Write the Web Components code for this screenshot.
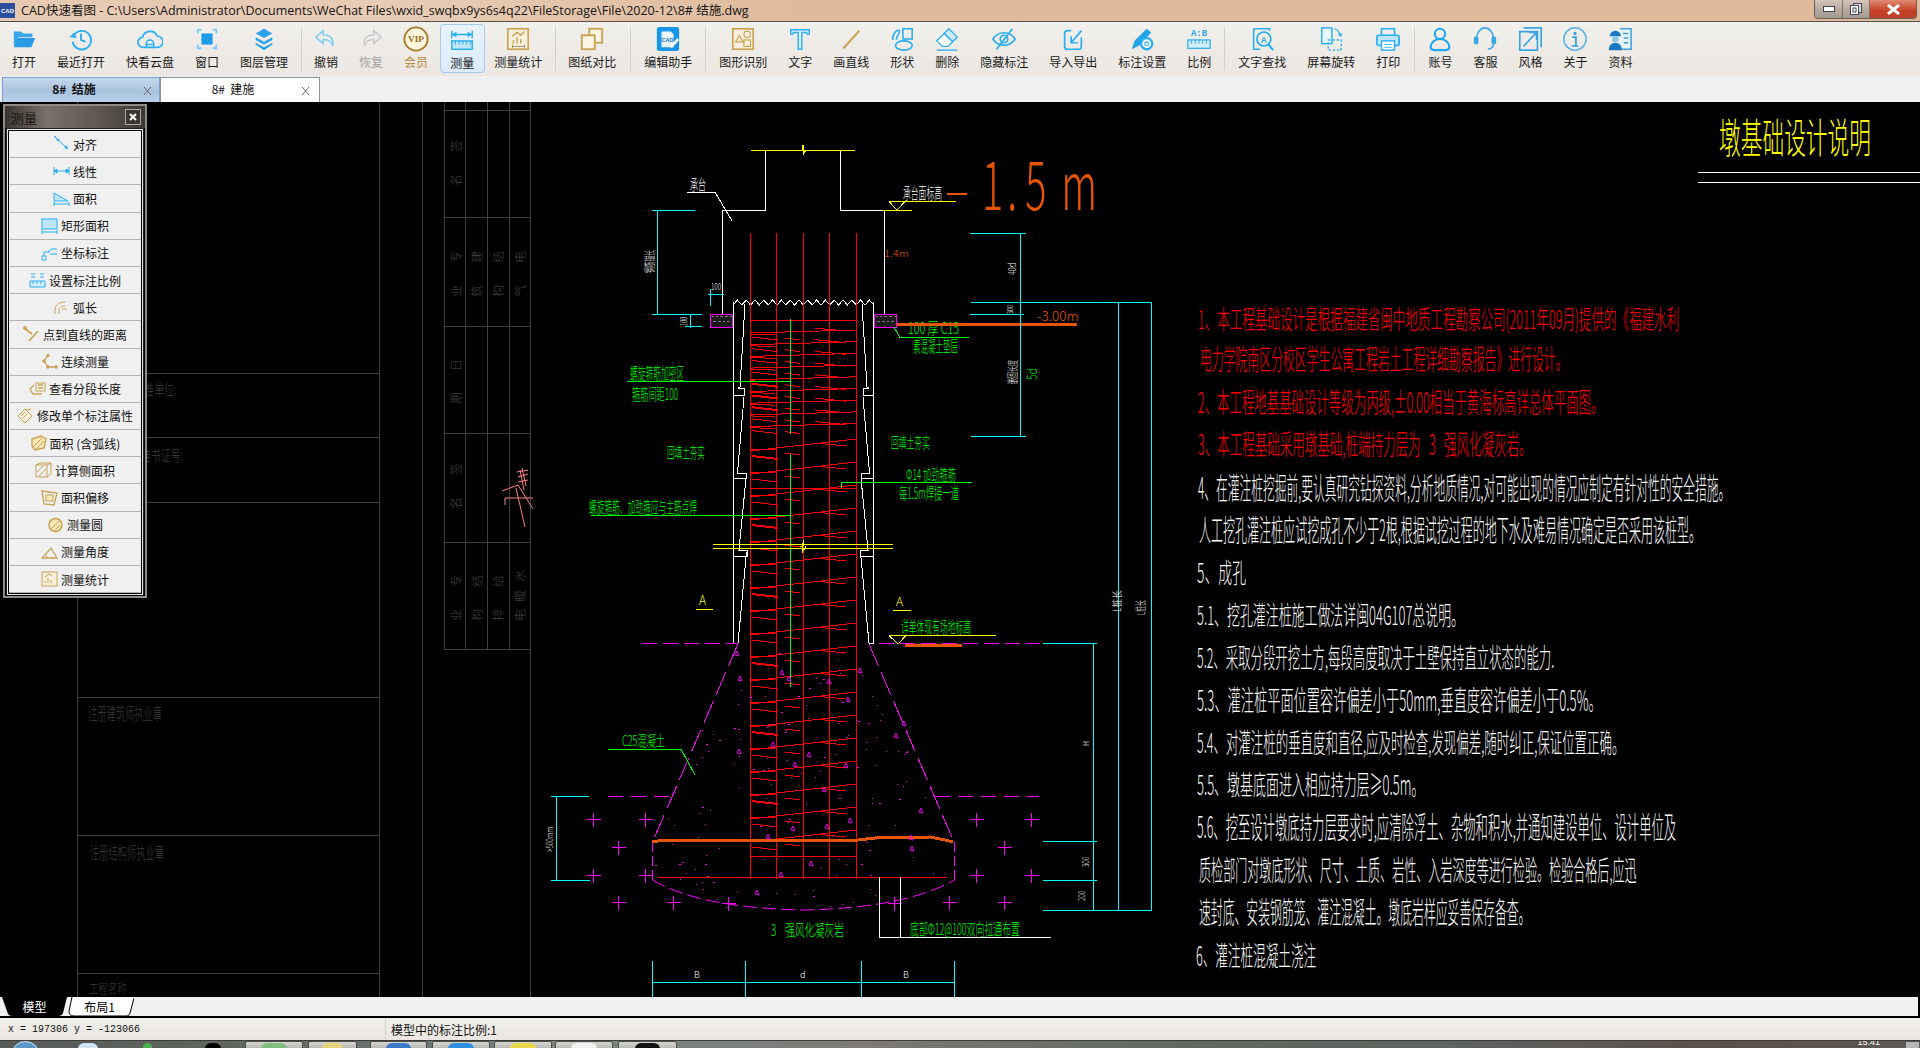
<!DOCTYPE html>
<html lang="zh"><head><meta charset="utf-8"><title>CAD快速看图</title>
<style>html,body{margin:0;padding:0;background:#000;overflow:hidden}
body{font-family:"Noto Sans CJK SC","Noto Sans",sans-serif;font-size:12px;width:1920px;height:1048px}</style></head>
<body><cad-app></cad-app>
<script>
const B='#29aef0',L='#7fcdf5',G='#c9a354';
const s=(c,w=1.8)=>`fill="none" stroke="${c}" stroke-width="${w}"`;
const ICON={
open:`<path d="M3 6h8l2 2h10v4H8l-5 10z" fill="#3aa6e8"/><path d="M7 13h19l-4 10H3z" fill="#2a9be6"/>`,
recent:`<path d="M7 9A10 10 0 1 1 5 17" ${s(B,2)}/><path d="M1.500 12l5-5 3 6z" fill="${B}"/><path d="M14 8v7l5 2" ${s(B,2)}/>`,
cloud:`<path d="M7 23a5.500 5.500 0 0 1-1-11 8.500 8.500 0 0 1 16-1 6 6 0 0 1 0 12z" ${s(B,1.8)}/><path d="M10 23v-4a4 4 0 0 1 8 0v4M10 20h8" ${s(B,1.6)}/>`,
win:`<path d="M4 8V4h4M20 4h4v4M24 20v4h-4M8 24H4v-4" ${s(L,2)}/><rect x="8" y="8" width="12" height="12" fill="#1c9be6"/>`,
layer:`<path d="M14 3l9 5-9 5-9-5z" fill="#2aa3ec"/><path d="M5 12l9 5 9-5v3l-9 5-9-5z" fill="#2aa3ec"/><path d="M5 18l9 5 9-5v2l-9 6-9-6z" fill="#2aa3ec"/>`,
undo:`<path d="M11 5L3 12l8 7v-4.500c6 0 9 2 10 7 2-7-2-12-10-12z" ${s(L,1.600)}/>`,
redo:`<path d="M17 5l8 7-8 7v-4.500c-6 0-9 2-10 7-2-7 2-12 10-12z" ${s('#c9c9c9',1.600)}/>`,
vip:`<circle cx="14" cy="14" r="12.500" fill="#fff6de" stroke="#a9782a" stroke-width="2"/><text x="14" y="17.500" font-family="Liberation Serif" font-weight="700" font-size="10" text-anchor="middle" fill="#a06a14">VIP</text>`,
meas:`<path d="M3 8h22M3 4v8M25 4v8" ${s(B,1.500)}/><path d="M3 8l5-3v6zM25 8l-5-3v6z" fill="${B}"/><rect x="3" y="15" width="22" height="9" fill="#bfe5fb" stroke="${B}" stroke-width="1.500"/><path d="M7 15v4M11 15v4M15 15v4M19 15v4M23 15v4" ${s(B,1)}/>`,
stat:`<rect x="3" y="3" width="22" height="22" fill="#f7f0dc" stroke="${G}" stroke-width="1.800"/><path d="M9 15v4M13 12v7M17 14v5M8 11l5-4 4 3 4-4" ${s(G,1.500)}/><path d="M8 22h13M8 20v4M21 20v4" ${s('#9a8a66',1)}/>`,
comp:`<rect x="11" y="3" width="14" height="15" fill="#fbf5e4" stroke="${G}" stroke-width="2"/><rect x="3" y="10" width="14" height="15" fill="#fbf5e4" stroke="${G}" stroke-width="2"/>`,
edit:`<rect x="2" y="1" width="24" height="26" rx="3" fill="#1796e8"/><path d="M7 6h10l3 3v14H7z" fill="#e9f6ff"/><text x="13.500" y="17" font-family="Liberation Sans" font-weight="700" font-size="6" text-anchor="middle" fill="#1577b8">CAD</text><path d="M16 22l8-9 2 2-8 9z" fill="#fff"/>`,
shape:`<rect x="3" y="3" width="22" height="22" fill="#f8f1de" stroke="${G}" stroke-width="1.800"/><path d="M6 17l4-7 4 7z" ${s(G,1.300)}/><circle cx="18.500" cy="9" r="3.500" ${s(G,1.300)}/><rect x="15" y="15" width="7" height="7" ${s(G,1.300)}/>`,
text:`<path d="M4 4h20v5h-2l-1-2h-5v18h-4V7H7L6 9H4z" fill="#d8f0fc" stroke="${B}" stroke-width="1.500"/>`,
line:`<path d="M6 24L23 5" ${s(G,2.300)}/>`,
form:`<rect x="15" y="3" width="10" height="11" ${s(B,1.700)}/><ellipse cx="16" cy="21" rx="9" ry="5" ${s(B,1.700)}/><path d="M4 15c-1-6 5-12 7-10s-4 7-3 10" ${s(B,1.700)}/>`,
erase:`<path d="M16 3l9 9-5 5-9-9z" fill="#cfeafa" stroke="${B}" stroke-width="1.400"/><path d="M11 8l9 9-5 5H9l-6-6z" fill="#fff" stroke="${B}" stroke-width="1.400"/><path d="M3 26h22" ${s(B,1.400)}/>`,
eye:`<path d="M2 14c6-9 18-9 24 0-6 9-18 9-24 0z" ${s(B,1.800)}/><circle cx="14" cy="14" r="4" ${s(B,1.800)}/><path d="M6 25L23 3" ${s(B,1.800)}/>`,
io:`<path d="M12 5H8a3 3 0 0 0-3 3v14a3 3 0 0 0 3 3h12a3 3 0 0 0 3-3V12" ${s(B,1.800)}/><path d="M12 18l11-13M12 11v7h7" ${s(B,1.800)}/>`,
dim:`<path d="M3 25l3-9L19 3l5 4L11 21z" fill="#22a3ea"/><circle cx="19" cy="19" r="6" fill="#fff" stroke="${B}" stroke-width="2.500"/><circle cx="19" cy="19" r="2" ${s(B,1.300)}/>`,
ratio:`<text x="14" y="11" font-family="Liberation Mono" font-weight="700" font-size="9.500" text-anchor="middle" fill="#1fa2ea">A:B</text><rect x="2" y="15" width="24" height="9" fill="#d4eefc" stroke="${B}" stroke-width="1.300"/><path d="M6 15v4M10 15v4M14 15v4M18 15v4M22 15v4" ${s(B,1)}/>`,
find:`<path d="M5 3h17v2M5 3v22h7" ${s(B,1.700)}/><circle cx="16" cy="14" r="7.500" ${s(B,1.800)}/><path d="M21 20l5 6" ${s(B,2.400)}/><text x="16" y="18" font-family="Liberation Sans" font-weight="700" font-size="9" text-anchor="middle" fill="${B}">A</text>`,
rot:`<rect x="4" y="2" width="11" height="17" fill="#e6f5fd" stroke="${B}" stroke-width="1.500"/><path d="M11 15h14v11H11z" fill="none" stroke="${B}" stroke-width="1.500" stroke-dasharray="2.500 2"/><path d="M18 3c3 1 5 3 6 7M22 8l2 3 2-3" ${s(B,1.300)}/>`,
print:`<path d="M7 10V3h14v7" ${s(B,1.800)}/><rect x="2" y="10" width="24" height="11" rx="2" fill="#bfe5fb" stroke="${B}" stroke-width="1.800"/><rect x="7" y="16" width="14" height="10" fill="#fff" stroke="${B}" stroke-width="1.500"/><path d="M10 20h8M10 23h8" ${s(B,1)}/>`,
user:`<circle cx="14" cy="8.500" r="5.500" ${s('#1ea7f2',2.300)}/><path d="M14 14c-6 0-10 4-10 9 0 2 2 3 4 3h12c2 0 4-1 4-3 0-5-4-9-10-9z" ${s('#1ea7f2',2.300)}/>`,
head:`<path d="M5 14C5 7 9 2 14 2s9 5 9 12v6c0 3-3 5-6 5" ${s('#3aa8e4',1.700)}/><rect x="2" y="11" width="5" height="9" rx="2.500" fill="#3aa8e4"/><rect x="21" y="11" width="5" height="9" rx="2.500" fill="#3aa8e4"/>`,
style:`<path d="M7 2h19v21M3 6v20h19V6z" ${s('#38a5e2',1.800)}/><path d="M7 22L20 8M13 7h8v8" ${s('#38a5e2',1.800)}/>`,
info:`<circle cx="14" cy="14" r="12" ${s('#55b4e8',1.600)}/><circle cx="14" cy="8" r="1.700" fill="#2ba0e0"/><path d="M11 12h4v9M10.500 21.500h7" ${s('#2ba0e0',1.800)}/>`,
data:`<path d="M14 3h12v22H15" fill="#e8f5fd" stroke="#3f9fdc" stroke-width="1.600"/><path d="M17 8h6M18 13h5M18 18h5" ${s('#3f9fdc',1.600)}/><path d="M3 11a6 6 0 0 1 12 0z" fill="#1878c4"/><circle cx="9" cy="14" r="3.500" fill="#8fc8ec"/><path d="M2 26c0-5 3-8 7-8s7 3 7 8z" fill="#1878c4"/>`
};
const TOOLS=[['打开','open'],['最近打开','recent'],['快看云盘','cloud'],['窗口','win'],['图层管理','layer'],5,['撤销','undo'],['恢复','redo',1],['会员','vip',2],['测量','meas',3],['测量统计','stat'],5,['图纸对比','comp'],7,['编辑助手','edit'],6,['图形识别','shape'],['文字','text'],['画直线','line'],['形状','form'],['删除','erase'],['隐藏标注','eye'],['导入导出','io'],['标注设置','dim'],['比例','ratio'],6,['文字查找','find'],['屏幕旋转','rot'],['打印','print'],7,['账号','user'],['客服','head'],['风格','style'],['关于','info'],['资料','data']];
const PI=(b,c=B)=>`<svg width="17" height="16" viewBox="0 0 17 16" fill="none" stroke="${c}" stroke-width="1">${b}</svg>`;
const ROWS=[
['对齐',PI('<path d="M1 1l2-1M2 1l13 12M13 13l2-1"/><circle cx="5" cy="4" r="1" fill="#29aef0"/><circle cx="13" cy="11" r="1" fill="#29aef0"/>')],
['线性',PI('<path d="M1 4v8M16 4v8M1 8h15"/><path d="M1 8l3-2v4zM16 8l-3-2v4z" fill="#29aef0"/>')],
['面积',PI('<path d="M1 11V3l14 8z" fill="#bfe5fb"/><path d="M1 14h15M1 12v4M16 12v4"/>')],
['矩形面积',PI('<rect x="1" y="1" width="15" height="10" fill="#bfe5fb"/><path d="M1 14h15M1 12v4M16 12v4"/>')],
['坐标标注',PI('<rect x="1" y="11" width="4" height="4"/><path d="M3 11V7h4l3-3h6M7 7h2M9 9h7"/>')],
['设置标注比例',PI('<path d="M1 9h15v6H1z" fill="#d4eefc"/><path d="M2 2h4M11 2h4M2 5h4M11 5h4M4 9v3M8 9v3M12 9v3"/>')],
['弧长',PI('<path d="M2 15V11C2 6 6 3 12 3M6 15V11c0-2 2-4 6-4M9 10h5"/>',G)],
['点到直线的距离',PI('<path d="M6 15L15 5M1 2l8 6" stroke-width="1.600"/><circle cx="2" cy="2" r="1.500" fill="#c9a354"/>',G)],
['连续测量',PI('<path d="M7 1L3 7l4 6h8" stroke-width="1.300"/><circle cx="7" cy="1.500" r="1.300" fill="#c9a354"/><circle cx="3" cy="7" r="1.300" fill="#c9a354"/><circle cx="7" cy="13" r="1.300" fill="#c9a354"/><circle cx="15" cy="13" r="1.300" fill="#c9a354"/>',G)],
['查看分段长度',PI('<rect x="7" y="2" width="9" height="8"/><path d="M9 4h5M9 7h5M5 4L1 8l3 5h9" stroke-width="1.300"/>',G)],
['修改单个标注属性',PI('<path d="M1 8l7-7 7 7-7 7z" fill="#f7f0dc"/><path d="M4 8l4-4M6 10l4-4M9 2l5-1"/>',G)],
['面积 (含弧线)',PI('<path d="M2 4l9-3 5 3-2 9-9 2-3-4z" fill="#f7e6b8" stroke-width="1.400"/><path d="M3 12l9-9M6 14l8-8"/>',G)],
['计算侧面积',PI('<path d="M1 3h11v12H1zM12 3l4-2v11l-4 3M1 3l4-2h11"/><path d="M2 10l6-6M4 14l7-7"/>',G)],
['面积偏移',PI('<path d="M1 1l15 2-3 12-10-1z" stroke-width="1.300"/><rect x="5" y="5" width="7" height="6" fill="#f7e6b8"/>',G)],
['测量圆',PI('<circle cx="8.500" cy="8" r="6.500" fill="#f7e6b8" stroke-width="1.500"/><path d="M4 12l8-8M7 14l6-6"/>',G)],
['测量角度',PI('<path d="M1 14h15L10 4z" stroke-width="1.300"/><path d="M6 14a5 5 0 0 0-2-4"/>',G)],
['测量统计',PI('<rect x="1" y="1" width="15" height="14" fill="#f7f0dc"/><path d="M4 10v2M7 7v5M10 9v3M4 6l4-3 3 2"/>',G)]];

/* ---------- drawing ---------- */
function drawing(){
 const CY='#00ffff',RD='#ff0000',GR='#00ff00',YL='#ffff00',WH='#ffffff',MG='#ff00ff',OR='#e85500',GY='#3d3d3d';
 let o=[];
 const ctx=document.createElement('canvas').getContext('2d');
 const kx=(t,fs,len,fam)=>{ctx.font=`300 ${fs}px ${fam?`"${fam}",`:''}"Noto Sans CJK SC",sans-serif`;return (len/ctx.measureText(t).width).toFixed(4)};
 const esc=t=>t.replace(/&/g,'&amp;').replace(/</g,'&lt;').replace(/>/g,'&gt;');
 const l=(x1,y1,x2,y2,c,w=1,d='')=>o.push(`<line x1="${x1}" y1="${y1}" x2="${x2}" y2="${y2}" stroke="${c}" stroke-width="${w}"${d?` stroke-dasharray="${d}"`:''}/>`);
 const p=(pts,c,w=1,d='',f='none')=>o.push(`<polyline points="${pts}" fill="${f}" stroke="${c}" stroke-width="${w}"${d?` stroke-dasharray="${d}"`:''}/>`);
 const T=(x1,x2,y1,y2,t,c,fam)=>{const fs=(y2-y1)/.92,b=y2-.08*fs;
  o.push(`<text transform="translate(${x1},${b.toFixed(1)}) scale(${kx(t,fs,x2-x1,fam)},1)" font-size="${fs.toFixed(1)}" fill="${c}"${fam?` font-family="${fam}"`:''}>${esc(t)}</text>`)};
 const R=(x1,x2,y1,y2,t,c)=>{const fs=(x2-x1)/.92,b=x2-.08*fs;
  o.push(`<text transform="translate(${b.toFixed(1)},${y2}) rotate(-90) scale(${kx(t,fs,y2-y1)},1)" font-size="${fs.toFixed(1)}" fill="${c}">${esc(t)}</text>`)};
 /* grey title block */
 [77,379,422,530].forEach(x=>l(x+.5,102,x+.5,997,GY));
 [444,465,487,509].forEach(x=>l(x+.5,102,x+.5,649,GY));
 [373,437,502,697,835,973].forEach(y=>l(77,y+.5,379,y+.5,GY));
 [110,217,326,433,542,649].forEach(y=>l(444,y+.5,530,y+.5,GY));
 T(134,177,382,396,'批准单位:',GY);T(131,183,448,462,'批准书证号:',GY);
 T(88,162,705,721,'注册建筑师执业章',GY);T(90,164,844,860,'注册结构师执业章',GY);T(89,127,982,994,'工程名称',GY);
 const rc=(xc,ys,chars)=>chars.split('').forEach((ch,i)=>{o.push(`<text transform="translate(${xc+5},${ys[i]+6}) rotate(-90)" font-size="12" fill="#444">${ch}</text>`)});
 rc(456,[146,180],'签名');rc(456,[257,291],'专业');rc(477,[257,291],'建筑');rc(498,[257,291],'结构');rc(520,[257,291],'电气');
 rc(456,[365,398],'日期');rc(456,[469,503],'签名');rc(456,[581,615],'专业');rc(477,[581,615],'结构');rc(498,[581,615],'给排');rc(520,[576,596,615],'水暖电');
 o.push(`<path d="M502,491 L518,485 L533,509 M505,505 V498 H533 M516,488 L525,527 M517,472 L528,470 M518,477 L528,474 M518,482 L528,480 M520,470 L524,490 M522,468 L526,486" fill="none" stroke="#ff8080"/>`);
 /* upper structure */
 l(751,150.500,855,150.500,YL);p('799,150 802,150 803,145 803,155 806,150',YL);
 p('765.500,150 765.500,210.500 722.500,210.500 722.500,315',WH);
 p('840.500,150 840.500,210.500 884.500,210.500 884.500,315',WH);
 l(883,210.500,912,210.500,YL);p('889,201.500 905,201.500 897,210 889,201.500',YL);l(889,201.500,956,201.500,YL);
 T(903,942,185,200,'承台面标高',WH);l(947,194,967,194,OR,2);
 o.push(`<text transform="translate(982,210) scale(.6,1)" x="0 42 72 132" font-family="Roboto" font-weight="100" font-size="66" fill="${OR}">1.5m</text>`);
 T(690,706,177,191,'承台',WH);l(687,192.500,715,192.500,WH);l(715,192,732,221,WH);
 /* cyan dims left */
 l(652,210.500,695,210.500,CY);l(657.500,210,657.500,314,CY);l(652,314.500,702,314.500,CY);
 R(645,655,250,273,'钢筋锚长',WH);R(680,688,317,326,'100',WH);l(690.500,314,690.500,328,CY);l(685,326.500,702,326.500,CY);
 T(711,721,283,291,'100',WH);l(710.500,289,710.500,306,CY);l(708,294.500,724,294.500,CY);
 /* pad boxes */
 [[710,314],[874,314]].forEach(([x,y])=>{o.push(`<rect x="${x+.5}" y="${y+.5}" width="22" height="13" fill="#1b1b1b" stroke="${MG}"/>`);
   for(let i=0;i<14;i++)o.push(`<rect x="${x+2+(i*7)%19}" y="${y+2+(i*5)%10}" width="2" height="1" fill="#777"/>`)});
 /* pier */
 let z=[];for(let x=733,i=0;x<=874;x+=4.400,i++)z.push(x.toFixed(1)+','+(i%2?300:305));p(z.join(' '),WH);
 const walls=[[733.500,302,733.500,643]];walls.forEach(a=>{l(a[0],a[1],a[2],a[3],WH);l(1607-a[0],a[1],1607-a[2],a[3],WH)});
 const side=[[745,304,740,387,738,388,744,388,744,395,733,395],[744,397,737.500,473,746,473,746,478,733,478],[746,478,739,550,747,550,747,556,733,556],[746.500,552,738,643,733,643]];
 side.forEach(a=>{let L1=[],L2=[];for(let i=0;i<a.length;i+=2){L1.push(a[i]+','+a[i+1]);L2.push((1607-a[i])+','+a[i+1])}p(L1.join(' '),WH);p(L2.join(' '),WH)});
 /* rebar */
 [750.500,776.500,803.500,829.500,856.500].forEach(x=>l(x,233,x,879,RD));
 const spiral=(y,st)=>{l(750,y+(st?4:1),856,y-(st?8:2),RD);l(752,y+st/3+5,778,y+st/3+8,RD,(y|0)%3?1:2);l(815,y-4,846,y-1,RD);l(785,y+6,800,y+8,RD);l(750,y+2,775,y+3,RD)};
 l(750,320.500,856,320.500,RD,1.500);for(let y=332;y<436;y+=11.700)spiral(y,0);
 for(let y=447;y<855;y+=23)spiral(y,12);
 l(750,488.500,856,488.500,RD);l(750,856.500,856,856.500,RD);l(658,877.500,947,877.500,RD);
 /* green */
 l(790.500,319,790.500,434,GR,1.500);l(790.500,454,790.500,687,GR,1.500);
 l(627,381.500,790,381.500,GR);l(591,515.500,790,515.500,GR);p('972,482.500 841.500,482.500 841.500,488',GR);p('894,327 900,337.500 969,337.500',GR);
 T(908,959,320,335,'100 厚 C15',GR);T(913,958,338,353,'素混凝土垫层',GR);
 T(630,684,365,381,'螺旋箍筋加密区',GR);T(632,678,386,401,'箍筋间距100',GR);
 T(667,705,445,459,'回填土夯实',GR);T(891,930,435,449,'回填土夯实',GR);
 T(906,956,467,481,'Φ14 加劲箍筋',GR);T(899,959,485,500,'每1.5m焊接一道',GR);
 T(589,697,499,514,'螺旋箍筋、加劲箍应与主筋点焊',GR);
 /* orange */
 T(884,909,250,258,'1.4m',OR,'Liberation Sans');T(1037,1079,310,322,'-3.00m',OR,'Liberation Sans');
 l(897,324,1077,324,OR,3);
 /* right dims */
 l(970,233.500,1026,233.500,CY);l(1020.500,233,1020.500,437,CY);l(971,302.500,1151,302.500,CY);l(970,314.500,1024,314.500,CY);l(971,436.500,1026,436.500,CY);
 l(1118.500,302,1118.500,911,CY);l(1151.500,302,1151.500,911,CY);l(1043,910.500,1151,910.500,CY);
 R(1008,1017,263,275,'40d',WH);R(1007,1014,305,314,'300',WH);R(1008,1018,360,384,'嵌固长度',WH);R(1026,1038,368,380,'5d',GR);
 R(1113,1122,590,612,'L桩长',WH);R(1136,1146,600,615,'L桩长',WH);
 /* lower */
 l(713,544.500,893,544.500,YL);l(713,548.500,893,548.500,YL);p('800,546 802,546 804,540 802,553 806,546',YL);
 T(699,707,594,606,'A',YL,'Liberation Sans');l(696,609.500,713,609.500,YL);T(896,904,596,607,'A',YL,'Liberation Sans');l(893,610.500,911,610.500,YL);
 l(889,635.500,996,635.500,YL);p('889,635.500 906,635.500 898,644 889,635.500',YL);T(901,971,619,634,'详单体现有场地标高',GR);l(905,645,962,645,OR,3);
 l(642,643.500,738,643.500,MG,1,'15 6');l(879,643.500,1040,643.500,MG,1,'15 6');l(608,796.500,672,796.500,MG,1,'15 8');l(935,796.500,1039,796.500,MG,1,'15 8');
 l(738,644,652.500,842,MG,1,'24 7');l(869,644,954,842,MG,1,'24 7');l(652.500,842,652.500,880,MG,1,'10 4');l(954.500,842,954.500,880,MG,1,'10 4');
 o.push(`<path d="M652.500,880 Q700,908 804,910 Q905,908 954.500,880" fill="none" stroke="${MG}" stroke-dasharray="14 5"/>`);
 p('652,842 664,840 858,840 875,838 930,837 945,840 953,842',OR,3);
 [[148,838],[295,838],[218,922],[148,1004],[295,1004],[218,1087],[372,1087],[525,1090],[990,1090],[1145,1087],[1300,1087],[1222,1004],[1376,1004],[1300,922],[1222,838],[1376,838]].forEach(([X,Y])=>{const x=Math.round(540+X/2.8)+.5,y=Math.round(540+Y/3)+.5;l(x-7,y,x+7,y,MG);l(x,y-7,x,y+7,MG)});
 /* speckle */
 let sd=12345;const rnd=()=>(sd=(sd*1664525+1013904223)>>>0)/4294967296;
 for(let i=0;i<170;i++){const y=650+rnd()*258,t=Math.min(1,(y-644)/198),xa=738-85*t,xb=869+85*t,nar=y>880?(y-880)*2.600:0,x=xa+nar+rnd()*(xb-xa-2*nar);
  if(i%7==0){const a=x|0,b=y|0;o.push(`<path d="M${a},${b} l2,-4 l2,5 z" fill="none" stroke="${MG}" stroke-width=".9"/>`)}else o.push(`<rect x="${x|0}" y="${y|0}" width="${i%4?1:2}" height="1" fill="${MG}"/>`)}
 T(622,665,733,747,'C25混凝土',GR);l(608,749.500,681,749.500,GR);l(681,749,695,775,GR);
 l(551,796.500,589,796.500,CY);l(556.500,796,556.500,880,CY);l(551,880.500,590,880.500,CY);R(546,554,827,852,'>500mm',WH);
 l(1093.500,643,1093.500,910,CY);l(1043,643.500,1097,643.500,CY);l(1043,841.500,1097,841.500,CY);l(1043,880.500,1097,880.500,CY);
 R(1083,1090,741,746,'H',WH);R(1082,1090,857,867,'300',WH);R(1078,1086,891,901,'200',WH);
 p('879.500,877 879.500,937.500 1051,937.500',WH);l(900.500,877,900.500,937,WH);
 T(771,844,922,937,'3    强风化凝灰岩',GR);T(910,1020,921,936,'底部Φ12@100双向拉通布置',GR);
 l(652,982.500,954,982.500,CY);[652.500,745.500,861.500,954.500].forEach(x=>l(x,961,x,997,CY));
 T(694,700,971,979,'B',WH,'Liberation Sans');T(800,805,971,979,'d',WH,'Liberation Sans');T(903,909,971,979,'B',WH,'Liberation Sans');
 /* notes */
 T(1719,1871,118,156,'墩基础设计说明',YL);l(1698,172.500,1920,172.500,WH);l(1698,182.500,1920,182.500,WH);
 [[1198,1679,307,331,'1、本工程基础设计是根据福建省闽中地质工程勘察公司(2011年09月)提供的《福建水利',RD],
  [1200,1567,346,372,'电力学院南区分校区学生公寓工程岩土工程详细勘察报告》进行设计。',RD],
  [1198,1603,389,415,'2、本工程地基基础设计等级为丙级,±0.00相当于黄海标高详总体平面图。',RD],
  [1198,1531,431,457,'3、本工程基础采用墩基础,桩端持力层为   3   强风化凝灰岩。',RD],
  [1198,1731,474,501,'4、在灌注桩挖掘前,要认真研究钻探资料,分析地质情况,对可能出现的情况应制定有针对性的安全措施。',WH],
  [1199,1702,516,543,'人工挖孔灌注桩应试挖成孔不少于2根,根据试挖过程的地下水及难易情况确定是否采用该桩型。',WH],
  [1197,1246,560,585,'5、成孔',WH],
  [1197,1464,603,627,'5.1、挖孔灌注桩施工做法详闽04G107总说明。',WH],
  [1197,1554,645,670,'5.2、采取分段开挖土方,每段高度取决于土壁保持直立状态的能力.',WH],
  [1197,1601,687,713,'5.3、灌注桩平面位置容许偏差小于50mm,垂直度容许偏差小于0.5%。',WH],
  [1197,1624,730,755,'5.4、对灌注桩的垂直度和直径,应及时检查,发现偏差,随时纠正,保证位置正确。',WH],
  [1197,1424,772,797,'5.5、墩基底面进入相应持力层≥0.5m。',WH],
  [1197,1677,813,840,'5.6、挖至设计墩底持力层要求时,应清除浮土、杂物和积水,并通知建设单位、设计单位及',WH],
  [1199,1636,857,883,'质检部门对墩底形状、尺寸、土质、岩性、入岩深度等进行检验。检验合格后,应迅',WH],
  [1199,1531,898,925,'速封底、安装钢筋笼、灌注混凝土。墩底岩样应妥善保存备查。',WH],
  [1196,1316,943,968,'6、灌注桩混凝土浇注',WH]].forEach(a=>T(...a));
 return o.join('');
}

/* ---------- elements ---------- */
class CadApp extends HTMLElement{constructor(){super();this.attachShadow({mode:'open'}).innerHTML=`<style>:host{display:flex;flex-direction:column;width:1920px;height:1048px;overflow:hidden;background:#f0f0f0}</style>
<title-bar></title-bar><tool-bar></tool-bar><doc-tabs></doc-tabs><cad-canvas><measure-panel></measure-panel></cad-canvas><layout-tabs></layout-tabs><status-bar></status-bar><task-bar></task-bar>`}}
class TitleBar extends HTMLElement{constructor(){super();this.attachShadow({mode:'open'}).innerHTML=`<style>
:host{display:flex;height:22px;box-sizing:border-box;flex:none;align-items:flex-start;border-bottom:1px solid #57504a;background:linear-gradient(90deg,#e6c9b1 0,#e7cbb4 400px,#dfbb9d 800px,#dfba9b 100%);font:12.500px "Open Sans","Noto Sans CJK SC",sans-serif;color:#151515}
.logo{width:15px;height:15px;margin:3px 6px 0 0;flex:none}
.t{line-height:21px;white-space:nowrap;letter-spacing:.01px}
.ctl{margin-left:auto;margin-right:3px;display:flex;height:18px;border:1px solid #6b5f57;border-top:0;border-radius:0 0 4px 4px;overflow:hidden}
.b{display:flex;align-items:center;justify-content:center;background:linear-gradient(#d4c6ba,#b6a89d 55%,#a39a91);border-right:1px solid #7d7269}
.c{background:linear-gradient(#e08a73,#c63f25 60%,#b7422a);border:0}
</style><svg class="logo" viewBox="0 0 15 15"><rect width="15" height="15" fill="#2b4f9c"/><text x="7.500" y="10" font-size="6" font-weight="700" font-family="Liberation Sans" text-anchor="middle" fill="#fff">CAD</text></svg>
<span class="t">CAD快速看图 - C:\\Users\\Administrator\\Documents\\WeChat Files\\wxid_swqbx9ys6s4q22\\FileStorage\\File\\2020-12\\8# 结施.dwg</span>
<div class="ctl"><div class="b" style="width:27px"><svg width="12" height="6"><rect x=".5" y=".5" width="11" height="5" fill="#fff" stroke="#445"/></svg></div>
<div class="b" style="width:26px"><svg width="12" height="12"><rect x="3.500" y=".5" width="8" height="9" fill="#ddd" stroke="#445"/><rect x=".5" y="2.500" width="8" height="9" fill="#fff" stroke="#445"/><rect x="3" y="5" width="3" height="4" fill="none" stroke="#445"/></svg></div>
<div class="b c" style="width:46px"><svg width="13" height="11"><path d="M1 1l11 9M12 1L1 10" stroke="#fff" stroke-width="3"/></svg></div></div>`}}
class ToolItem extends HTMLElement{constructor(){super();this.attachShadow({mode:'open'}).innerHTML=`<style>
:host{display:flex;flex-direction:column;align-items:center;box-sizing:border-box;padding:0 10.500px;height:49px;font-size:12px;color:#1a1a1a;white-space:nowrap;border:0 solid transparent;position:relative}
:host([dim]){color:#a3a3a3}:host([gold]){color:#b58a3a}
:host([active]){border:1px solid #a6c9f0;border-radius:4px;background:linear-gradient(#eaf3fd,#dcebfb);padding:0 9.500px;margin-left:1px;margin-right:-1px}
.i{height:28px;width:24px;display:flex;align-items:center;justify-content:center;margin-top:1px}
::slotted(svg){flex:none;margin:0 -1px}
.l{line-height:16px;margin-top:1px}
</style><div class="i"><slot name="icon"></slot></div><div class="l"><slot></slot></div>`}}
class ToolBar extends HTMLElement{constructor(){super();const r=this.attachShadow({mode:'open'});
 let h=`<style>:host{display:flex;flex:none;height:54px;box-sizing:border-box;padding:2px 0 0 1.500px;align-items:flex-start;background:linear-gradient(#f1f0ec,#ebe6e1)}
 .sep{height:44px;width:1px;background:#d3d1cc;margin-top:3px;flex:none}</style>`;
 TOOLS.forEach(t=>{if(typeof t==='number'){const a=(t-1)/2;h+=`<div class="sep" style="margin-left:${a}px;margin-right:${a}px"></div>`}
  else h+=`<tool-item ${t[2]==1?'dim':t[2]==2?'gold':t[2]==3?'active':''}><svg slot="icon" viewBox="0 0 28 28" width="26" height="26">${ICON[t[1]]}</svg>${t[0]}</tool-item>`});
 r.innerHTML=h}}
class DocTabs extends HTMLElement{constructor(){super();this.attachShadow({mode:'open'}).innerHTML=`<style>
:host{display:flex;flex:none;height:26px;box-sizing:border-box;padding:1px 0 0 2px;background:#f0f0f0;font-size:12px;color:#111}
.t{width:158px;height:25px;box-sizing:border-box;display:flex;align-items:center;position:relative;border:1px solid #8b8f96;border-bottom:0;justify-content:center;background:#fff;padding:0 14px 3px 0;white-space:pre}
.a{background:linear-gradient(#c4d8ec,#a9c3df 55%,#bcd1e8);border-color:#7d9fd0;font-weight:700}
.t span{position:absolute;right:6px;top:5px;width:10px;height:12px}
</style><div class="t a">8#  结施<span><svg width="10" height="12"><path d="M1 2l7 8M8 2l-7 8" stroke="#666" fill="none"/></svg></span></div><div class="t" style="width:160px">8#  建施<span style="right:8px"><svg width="10" height="12"><path d="M1 2l7 8M8 2l-7 8" stroke="#666" fill="none"/></svg></span></div>`}}
class CadCanvas extends HTMLElement{constructor(){super();this.attachShadow({mode:'open'}).innerHTML=`<style>
:host{display:block;flex:none;height:895px;background:#000;position:relative;overflow:hidden}
svg{position:absolute;inset:0;display:block}
text{font-family:"Noto Sans CJK SC",sans-serif;font-weight:300;white-space:pre}
line,polyline{shape-rendering:crispEdges}
</style><svg width="1920" height="895" viewBox="0 102 1920 895">${drawing()}</svg><slot></slot>`}}
class PanelRow extends HTMLElement{constructor(){super();this.attachShadow({mode:'open'}).innerHTML=`<style>
:host{display:flex;align-items:center;justify-content:center;gap:3px;height:27.200px;flex:none;box-sizing:border-box;background:#f0f0f0;border-bottom:1px solid #b4b4b4;font-size:12px;color:#111;white-space:nowrap}
::slotted(svg){flex:none}
</style><slot name="icon"></slot><slot></slot>`}}
class MeasurePanel extends HTMLElement{constructor(){super();const rows=ROWS.map(r=>`<panel-row>${r[1].replace('<svg','<svg slot="icon"')}${r[0]}</panel-row>`).join('');
 this.attachShadow({mode:'open'}).innerHTML=`<style>
:host{position:absolute;left:3px;top:2px;width:144px;height:494px;box-sizing:border-box;display:flex;flex-direction:column;background:#262320;border:2px solid #8f8a84;box-shadow:inset 0 0 0 1px #000}
.h{height:22px;flex:none;display:flex;align-items:center;justify-content:space-between;padding:0 4px 0 6px;background:linear-gradient(90deg,#3a3531,#7a7268 30%,#5c554e 70%,#3b3733);font-size:13px;color:#191512}
.x{width:16px;height:16px;box-sizing:border-box;border:1px solid #aaa;background:#3a3632;display:flex;align-items:center;justify-content:center}
.b{margin:1px 2px;border:1px solid #e6e6e6;padding:1px;background:#000;flex:1;display:flex;flex-direction:column}
</style><div class="h"><span>测量</span><span class="x"><svg width="8" height="8"><path d="M1 1l6 6M7 1L1 7" stroke="#fff" stroke-width="2"/></svg></span></div><div class="b">${rows}</div>`}}
class LayoutTabs extends HTMLElement{constructor(){super();this.attachShadow({mode:'open'}).innerHTML=`<style>
:host{display:flex;flex:none;height:21px;box-sizing:border-box;background:#f0f0f0;border-bottom:2px solid #000;border-right:2px solid #000;font-size:12px;position:relative;padding-left:2px}
.t{position:relative;width:65px;height:19px;display:flex;align-items:center;justify-content:center}
.t svg{position:absolute;left:0;top:0}
.t span{position:relative}
</style><div class="t" style="color:#fff"><svg width="66" height="19"><path d="M0 0L6 17Q7 19 10 19H56Q60 19 61 16L65 0z" fill="#000"/></svg><span>模型</span></div>
<div class="t" style="color:#000"><svg width="67" height="19"><path d="M1 0L-2 14Q-2 19 3 19H56Q58 19 59 16L63 1" transform="translate(4,0)" fill="#fff" stroke="#000"/></svg><span>布局1</span></div>`}}
class StatusBar extends HTMLElement{constructor(){super();this.attachShadow({mode:'open'}).innerHTML=`<style>
:host{display:flex;flex:none;height:22px;box-sizing:border-box;align-items:center;background:linear-gradient(#efefe9,#ebe6e1);font-size:12px;color:#111}
.c{font:10px "Liberation Mono",monospace;width:377px;padding-left:8px;white-space:pre;flex:none}
.d{width:1px;height:20px;background:#d3d1cc;flex:none;margin-right:5px}
</style><div class="c">x = 197306 y = -123066</div><div class="d"></div><div>模型中的标注比例:1</div>`}}
class TaskBar extends HTMLElement{constructor(){super();const w=[[0,58,'#7fbf7f'],[5,49,'#e6d27a'],[13,57,'#3b78c8'],[5,58,'#2f8fe0'],[4,58,'#e8d84a'],[3,58,'#f2f2f2'],[5,59,'#111']];
 const blips=[[78,20,'#cfe3f2'],[143,9,'#4caf50'],[205,16,'#000']];
 this.attachShadow({mode:'open'}).innerHTML=`<style>
:host{display:flex;flex:none;height:8px;box-sizing:border-box;overflow:hidden;border-top:1px solid #403d38;padding-left:245px;position:relative;background:linear-gradient(90deg,#565a58,#60655f 12%,#788582 30%,#7c7a76 45%,#60685f 62%,#5e6462 75%,#5b4f4a 90%,#5c5a56)}
.b{height:8px;background:linear-gradient(#d5d5d2,#b9b9b6);border:1px solid #4b4b48;box-sizing:border-box;border-radius:2px 2px 0 0;flex:none;display:flex;justify-content:center}
.b i{display:block;width:45%;height:10px;border-radius:6px 6px 0 0;margin-top:1px}
.o{position:absolute;left:11px;top:0;width:29px;height:29px;border-radius:50%;background:#5d98c9;border:1px solid #c8dff0;box-sizing:border-box}
.p{position:absolute;top:2px;height:10px;border-radius:6px 6px 0 0}
.n{position:absolute;right:40px;top:-3px;font:9px/9px "Liberation Sans",sans-serif;color:#fff}
.s{position:absolute;right:0;top:0;width:15px;height:8px;background:#b8b8b4;border:1px solid #555;box-sizing:border-box}
</style><span class="o"></span>${blips.map(a=>`<span class="p" style="left:${a[0]}px;width:${a[1]}px;background:${a[2]}"></span>`).join('')}${w.map(a=>`<span class="b" style="margin-left:${a[0]}px;width:${a[1]}px"><i style="background:${a[2]}"></i></span>`).join('')}<span class="n">15:41</span><span class="s"></span>`}}
[['panel-row',PanelRow],['measure-panel',MeasurePanel],['tool-item',ToolItem],['title-bar',TitleBar],['tool-bar',ToolBar],['doc-tabs',DocTabs],['cad-canvas',CadCanvas],['layout-tabs',LayoutTabs],['status-bar',StatusBar],['task-bar',TaskBar],['cad-app',CadApp]].forEach(([n,c])=>customElements.define(n,c));
</script></body></html>
